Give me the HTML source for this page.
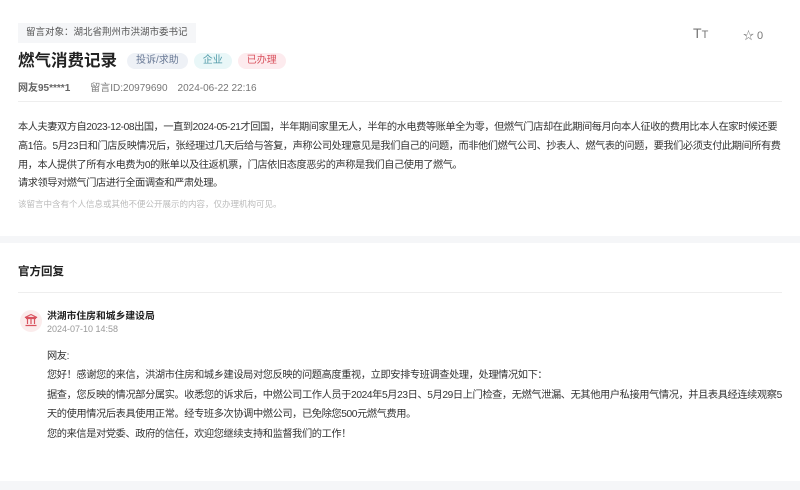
<!DOCTYPE html>
<html><head><meta charset="utf-8"><style>
*{margin:0;padding:0;box-sizing:border-box}
body{width:800px;height:490px;background:#f5f6f8;font-family:"Liberation Sans","Noto Sans CJK SC",sans-serif;color:#333;position:relative;overflow:hidden}
.card{position:absolute;left:0;width:800px;background:#fff}
.a{position:absolute;white-space:nowrap}
.tag{display:inline-block;height:16px;line-height:16px;padding:0 9px;border-radius:8px;font-size:10px;margin-left:6px;vertical-align:3px}
.p{font-size:10.2px;letter-spacing:-0.43px;color:#333}
</style></head><body>
<div class="card" style="top:0;height:236px">
  <div class="a" style="left:18px;top:23px;height:20px;line-height:20px;background:#f5f6f8;padding:0 8px;font-size:9.5px;color:#555">留言对象：湖北省荆州市洪湖市委书记</div>
  <div class="a" style="left:18px;top:48px;font-size:16.5px;font-weight:bold;color:#222;line-height:26px">燃气消费记录<span class="tag" style="margin-left:10px;background:#eef1f6;color:#6a7a96;font-weight:normal">投诉/求助</span><span class="tag" style="background:#e9f7f8;color:#4f9aa8;font-weight:normal">企业</span><span class="tag" style="background:#fdebee;color:#d9535f;font-weight:normal">已办理</span></div>
  <div class="a" style="left:18px;top:81px;font-size:10px;color:#777;line-height:16px"><b style="color:#666">网友95****1</b><span style="margin-left:20px">留言ID:20979690</span><span style="margin-left:10px">2024-06-22 22:16</span></div>
  <div class="a" style="left:693px;top:25px;font-size:14px;color:#777">T<span style="font-size:11px">T</span></div>
  <div class="a" style="left:743px;top:27px;font-size:11px;color:#777">☆ 0</div>
  <div class="a" style="left:18px;top:101px;width:764px;height:1px;background:#eee"></div>
  <div class="a p" style="left:18px;top:119px;line-height:18.8px">本人夫妻双方自2023-12-08出国，一直到2024-05-21才回国，半年期间家里无人，半年的水电费等账单全为零，但燃气门店却在此期间每月向本人征收的费用比本人在家时候还要<br>高1倍。5月23日和门店反映情况后，张经理过几天后给与答复，声称公司处理意见是我们自己的问题，而非他们燃气公司、抄表人、燃气表的问题，要我们必须支付此期间所有费<br>用，本人提供了所有水电费为0的账单以及往返机票，门店依旧态度恶劣的声称是我们自己使用了燃气。<br>请求领导对燃气门店进行全面调查和严肃处理。</div>
  <div class="a" style="left:18px;top:198px;font-size:8.5px;color:#bbb">该留言中含有个人信息或其他不便公开展示的内容，仅办理机构可见。</div>
</div>
<div class="card" style="top:243px;height:238px">
  <div class="a" style="left:18px;top:20px;font-size:11.5px;font-weight:bold;color:#222">官方回复</div>
  <div class="a" style="left:18px;top:49px;width:764px;height:1px;background:#eee"></div>
  <div class="a" style="left:20px;top:67px;width:22px;height:22px;border-radius:50%;background:#fbecec"></div>
  <svg class="a" style="left:24px;top:70px" width="14" height="14" viewBox="0 0 14 14" fill="none" stroke="#d9535f" stroke-width="1.2"><path d="M1 4.5L7 1.5L13 4.5Z M2 5.5H12 M3.5 6v5 M7 6v5 M10.5 6v5 M1.5 12.5H12.5"/></svg>
  <div class="a" style="left:47px;top:65px;font-size:9.8px;font-weight:bold;color:#222">洪湖市住房和城乡建设局</div>
  <div class="a" style="left:47px;top:81px;font-size:9px;color:#999">2024-07-10 14:58</div>
  <div class="a p" style="left:47px;top:104px;line-height:19.4px;letter-spacing:-0.38px">网友:<br>您好！感谢您的来信，洪湖市住房和城乡建设局对您反映的问题高度重视，立即安排专班调查处理，处理情况如下：<br>据查，您反映的情况部分属实。收悉您的诉求后，中燃公司工作人员于2024年5月23日、5月29日上门检查，无燃气泄漏、无其他用户私接用气情况，并且表具经连续观察5<br>天的使用情况后表具使用正常。经专班多次协调中燃公司，已免除您500元燃气费用。<br>您的来信是对党委、政府的信任，欢迎您继续支持和监督我们的工作！</div>
</div>
</body></html>
